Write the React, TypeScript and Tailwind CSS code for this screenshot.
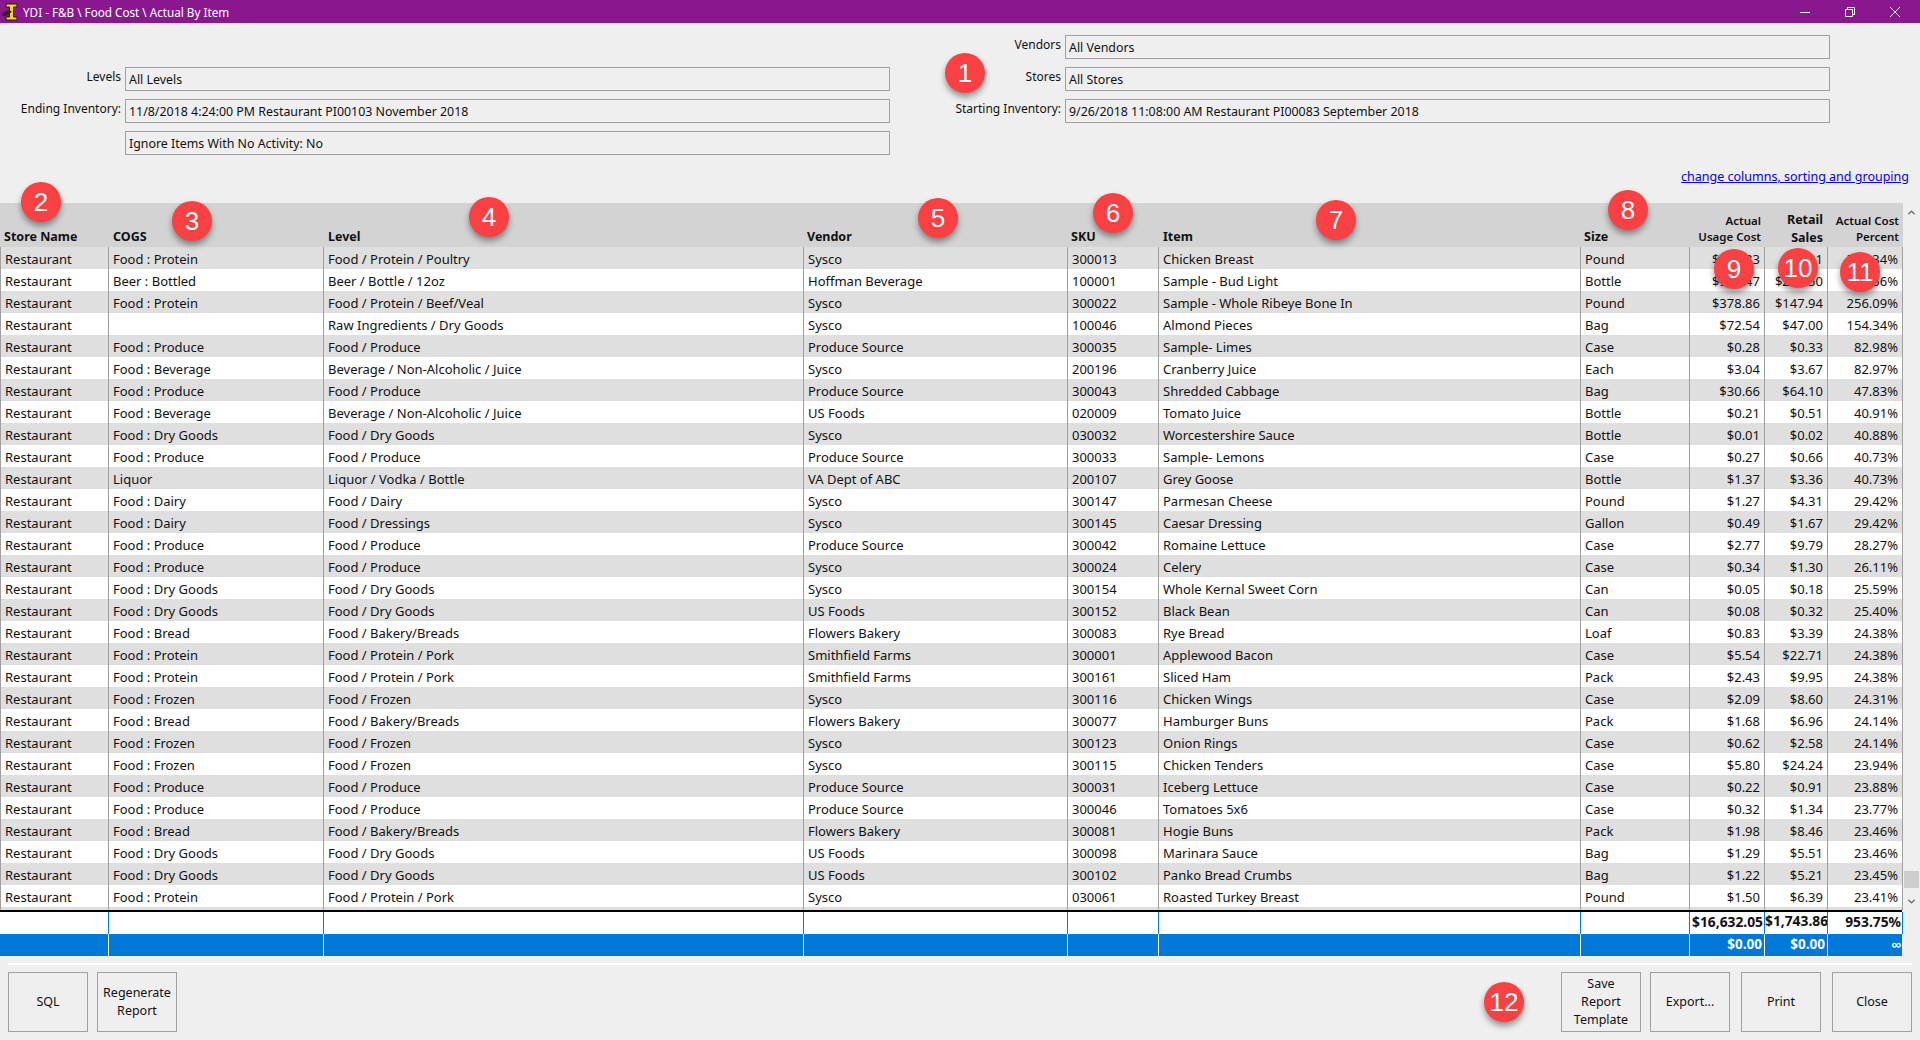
import React from "react";
import { ChevronDown, ChevronUp } from "lucide-react";

const cols = "grid grid-cols-[108px_215px_480px_264px_91px_422px_109px_75px_63px_76px]";

const rows = [
  ["Food : Protein", "Food / Protein / Poultry", "Sysco", "300013", "Chicken Breast", "Pound", "$508.83", "$90.01", "564.34%"],
  ["Beer : Bottled", "Beer / Bottle / 12oz", "Hoffman Beverage", "100001", "Sample - Bud Light", "Bottle", "$912.47", "$246.50", "380.56%"],
  ["Food : Protein", "Food / Protein / Beef/Veal", "Sysco", "300022", "Sample - Whole Ribeye Bone In", "Pound", "$378.86", "$147.94", "256.09%"],
  ["", "Raw Ingredients / Dry Goods", "Sysco", "100046", "Almond Pieces", "Bag", "$72.54", "$47.00", "154.34%"],
  ["Food : Produce", "Food / Produce", "Produce Source", "300035", "Sample- Limes", "Case", "$0.28", "$0.33", "82.98%"],
  ["Food : Beverage", "Beverage / Non-Alcoholic / Juice", "Sysco", "200196", "Cranberry Juice", "Each", "$3.04", "$3.67", "82.97%"],
  ["Food : Produce", "Food / Produce", "Produce Source", "300043", "Shredded Cabbage", "Bag", "$30.66", "$64.10", "47.83%"],
  ["Food : Beverage", "Beverage / Non-Alcoholic / Juice", "US Foods", "020009", "Tomato Juice", "Bottle", "$0.21", "$0.51", "40.91%"],
  ["Food : Dry Goods", "Food / Dry Goods", "Sysco", "030032", "Worcestershire Sauce", "Bottle", "$0.01", "$0.02", "40.88%"],
  ["Food : Produce", "Food / Produce", "Produce Source", "300033", "Sample- Lemons", "Case", "$0.27", "$0.66", "40.73%"],
  ["Liquor", "Liquor / Vodka / Bottle", "VA Dept of ABC", "200107", "Grey Goose", "Bottle", "$1.37", "$3.36", "40.73%"],
  ["Food : Dairy", "Food / Dairy", "Sysco", "300147", "Parmesan Cheese", "Pound", "$1.27", "$4.31", "29.42%"],
  ["Food : Dairy", "Food / Dressings", "Sysco", "300145", "Caesar Dressing", "Gallon", "$0.49", "$1.67", "29.42%"],
  ["Food : Produce", "Food / Produce", "Produce Source", "300042", "Romaine Lettuce", "Case", "$2.77", "$9.79", "28.27%"],
  ["Food : Produce", "Food / Produce", "Sysco", "300024", "Celery", "Case", "$0.34", "$1.30", "26.11%"],
  ["Food : Dry Goods", "Food / Dry Goods", "Sysco", "300154", "Whole Kernal Sweet Corn", "Can", "$0.05", "$0.18", "25.59%"],
  ["Food : Dry Goods", "Food / Dry Goods", "US Foods", "300152", "Black Bean", "Can", "$0.08", "$0.32", "25.40%"],
  ["Food : Bread", "Food / Bakery/Breads", "Flowers Bakery", "300083", "Rye Bread", "Loaf", "$0.83", "$3.39", "24.38%"],
  ["Food : Protein", "Food / Protein / Pork", "Smithfield Farms", "300001", "Applewood Bacon", "Case", "$5.54", "$22.71", "24.38%"],
  ["Food : Protein", "Food / Protein / Pork", "Smithfield Farms", "300161", "Sliced Ham", "Pack", "$2.43", "$9.95", "24.38%"],
  ["Food : Frozen", "Food / Frozen", "Sysco", "300116", "Chicken Wings", "Case", "$2.09", "$8.60", "24.31%"],
  ["Food : Bread", "Food / Bakery/Breads", "Flowers Bakery", "300077", "Hamburger Buns", "Pack", "$1.68", "$6.96", "24.14%"],
  ["Food : Frozen", "Food / Frozen", "Sysco", "300123", "Onion Rings", "Case", "$0.62", "$2.58", "24.14%"],
  ["Food : Frozen", "Food / Frozen", "Sysco", "300115", "Chicken Tenders", "Case", "$5.80", "$24.24", "23.94%"],
  ["Food : Produce", "Food / Produce", "Produce Source", "300031", "Iceberg Lettuce", "Case", "$0.22", "$0.91", "23.88%"],
  ["Food : Produce", "Food / Produce", "Produce Source", "300046", "Tomatoes 5x6", "Case", "$0.32", "$1.34", "23.77%"],
  ["Food : Bread", "Food / Bakery/Breads", "Flowers Bakery", "300081", "Hogie Buns", "Pack", "$1.98", "$8.46", "23.46%"],
  ["Food : Dry Goods", "Food / Dry Goods", "US Foods", "300098", "Marinara Sauce", "Bag", "$1.29", "$5.51", "23.46%"],
  ["Food : Dry Goods", "Food / Dry Goods", "US Foods", "300102", "Panko Bread Crumbs", "Bag", "$1.22", "$5.21", "23.45%"],
  ["Food : Protein", "Food / Protein / Pork", "Sysco", "030061", "Roasted Turkey Breast", "Pound", "$1.50", "$6.39", "23.41%"],
];

const heads = [
  ["Store Name", "pl-[4px]"],
  ["COGS", "pl-[5px]"],
  ["Level", "pl-[5px]"],
  ["Vendor", "pl-[4px]"],
  ["SKU", "pl-[4px]"],
  ["Item", "pl-[5px]"],
  ["Size", "pl-[4px]"],
];

// numbered callouts laid over the screenshot
const badges = [
  ["1", "left-[945px] top-[53px]"],
  ["2", "left-[21px] top-[182px]"],
  ["3", "left-[172px] top-[201px]"],
  ["4", "left-[469px] top-[197px]"],
  ["5", "left-[918px] top-[198px]"],
  ["6", "left-[1093px] top-[193px]"],
  ["7", "left-[1316px] top-[200px]"],
  ["8", "left-[1608px] top-[190px]"],
  ["9", "left-[1714px] top-[249px]"],
  ["10", "left-[1778px] top-[248px]"],
  ["11", "left-[1840px] top-[252px]"],
  ["12", "left-[1484px] top-[982px]"],
];

const Field = ({ label, value }: { label?: string; value: string }) => (
  <div className="flex h-[24px] items-start">
    <span className="w-[121px] shrink-0 text-right text-[12px] leading-[20px]">{label}</span>
    <div className="ml-[4px] flex h-[24px] flex-1 items-center border border-[#a0a0a0] pl-[3px] pt-[2px] text-[12.4px]">{value}</div>
  </div>
);

const Cell = ({ children, right }: { children?: React.ReactNode; right?: boolean }) => (
  <div className={`h-full overflow-hidden whitespace-nowrap border-l border-[#a0a0a0] leading-[24px] ${right ? "pr-[4px] text-right" : "pl-[4px]"}`}>
    {children}
  </div>
);

const Btn = ({ children }: { children: React.ReactNode }) => (
  <button className="flex h-[60px] w-[80px] items-center justify-center border border-[#a0a0a0] px-1 text-center leading-[18px]">
    {children}
  </button>
);

export default function App() {
  return (
    <div className="relative flex h-[1040px] w-[1920px] flex-col overflow-hidden bg-[#efefef] font-['Noto_Sans',sans-serif] text-[12.5px] text-[#111]">
      <div className="flex h-[23px] items-center bg-[#89188f] text-[11.7px] text-white">
        <svg viewBox="0 0 18 18" className="ml-[1px] h-[18px] w-[18px]">
          <path d="M5 1h11v3h-3.500v10H16v3H5v-3h3.500V4H5z" fill="#f5d90a" stroke="#1a1a1a" strokeWidth="1" />
          <path d="M1 12c1-3 4-4.500 8-4.500l2 1.500c-2 .5-3.500 2.500-6 4-2 .5-3.500 0-4-1z" fill="#262626" />
        </svg>
        <span className="ml-[4px] pt-[2px]">YDI - F&amp;B \ Food Cost \ Actual By Item</span>
        <div className="ml-auto flex items-center gap-[35px] pr-[20px]">
          <svg viewBox="0 0 10 10" className="h-[10px] w-[10px]" fill="none" stroke="white" strokeWidth="1">
            <path d="M0 5.500h10" />
          </svg>
          <svg viewBox="0 0 10 10" className="h-[10px] w-[10px]" fill="none" stroke="white" strokeWidth="1">
            <path d="M.5 2.500h7v7h-7zM2.500 2.500v-2h7v7h-2" />
          </svg>
          <svg viewBox="0 0 10 10" className="h-[10px] w-[10px]" fill="none" stroke="white" strokeWidth="1">
            <path d="M0 0l10 10M10 0L0 10" />
          </svg>
        </div>
      </div>

      <div className="flex h-[180px] pt-[12px]">
        <div className="flex w-[890px] flex-col gap-[8px] pt-[32px]">
          <Field label="Levels" value="All Levels" />
          <Field label="Ending Inventory:" value="11/8/2018 4:24:00 PM Restaurant PI00103 November 2018" />
          <Field value="Ignore Items With No Activity: No" />
        </div>
        <div className="ml-[50px] flex w-[890px] flex-col gap-[8px]">
          <Field label="Vendors" value="All Vendors" />
          <Field label="Stores" value="All Stores" />
          <Field label="Starting Inventory:" value="9/26/2018 11:08:00 AM Restaurant PI00083 September 2018" />
          <div className="-mr-[79px] mt-[37px] text-right">
            <a className="text-[#0000ee] underline">change columns, sorting and grouping</a>
          </div>
        </div>
      </div>

      <div className="flex">
        <div className="w-[1903px] text-[13px]">
          <div className={`${cols} h-[44px] bg-[#d3d3d3] text-[12.5px] font-bold`}>
            {heads.map(([h, pad]) => (
              <div key={h} className={`flex items-end pb-[1px] leading-[18px] ${pad}`}>{h}</div>
            ))}
            <div className="flex items-end justify-end pb-[2px] pr-[3px] text-right text-[11.5px] font-semibold leading-[16px]">Actual<br />Usage Cost</div>
            <div className="flex items-end justify-end pr-[4px] text-right leading-[18px]">Retail<br />Sales</div>
            <div className="flex items-end justify-end pb-[2px] pr-[4px] text-right text-[11.5px] font-semibold leading-[16px]">Actual Cost<br />Percent</div>
          </div>

          {rows.map((r, i) => (
            <div key={i} className={`${cols} h-[22px] ${i % 2 === 0 ? "bg-[#dfdfdf]" : "bg-white"}`}>
              <Cell>Restaurant</Cell>
              {r.slice(0, 6).map((v, j) => <Cell key={j}>{v}</Cell>)}
              {r.slice(6, 8).map((v, j) => <Cell key={j} right>{v}</Cell>)}
              <div className="h-full overflow-hidden border-x border-[#a0a0a0] pr-[4px] text-right leading-[24px]">{r[8]}</div>
            </div>
          ))}

          <div className={`${cols} h-[3px] bg-[#dfdfdf]`}>
            {Array.from({ length: 9 }).map((_, i) => <Cell key={i} />)}
            <div className="border-x border-[#a0a0a0]" />
          </div>
          <div className="h-[2px] w-[1902px] bg-black" />

          <div className={`${cols} h-[22px] bg-white text-[13.8px] font-bold`}>
            {Array.from({ length: 7 }).map((_, i) => (
              <div key={i} className={i ? "border-l border-[#0078d7]" : ""} />
            ))}
            <div className="whitespace-nowrap border-l border-[#0078d7] pr-[1px] text-right leading-[20px]">$16,632.05</div>
            <div className="whitespace-nowrap border-l border-[#0078d7] pr-[1px] text-right leading-[18px]">$1,743.86</div>
            <div className="whitespace-nowrap border-x border-[#0078d7] pr-[1px] text-right leading-[20px]">953.75%</div>
          </div>
          <div className={`${cols} h-[22px] w-[1902px] bg-[#0078d7] text-[13.5px] font-bold text-white`}>
            {Array.from({ length: 7 }).map((_, i) => (
              <div key={i} className={i ? "border-l border-white" : ""} />
            ))}
            {["$0.00", "$0.00", "∞"].map((v, i) => (
              <div key={i} className="border-l border-white pr-[2px] text-right leading-[20px]">{v}</div>
            ))}
          </div>
        </div>

        <div className="flex h-[704px] flex-1 flex-col items-center">
          <ChevronUp size={11} className="mt-[4px] text-[#606060]" strokeWidth={3} />
          <div className="mb-[8px] mt-auto h-[17px] w-[15px] bg-[#cdcdcd]" />
          <ChevronDown size={11} className="text-[#606060]" strokeWidth={3} />
        </div>
      </div>

      <div className="mx-[8px] mt-[7px] h-[2px] bg-white" />

      <div className="mt-[7px] flex justify-between px-[8px]">
        <div className="flex gap-[9px]">
          <Btn>SQL</Btn>
          <Btn>Regenerate Report</Btn>
        </div>
        <div className="flex gap-[9px]">
          <Btn>Save Report Template</Btn>
          <Btn>Export...</Btn>
          <div className="ml-[2px]"><Btn>Print</Btn></div>
          <div className="ml-[2px]"><Btn>Close</Btn></div>
        </div>
      </div>

      {badges.map(([n, pos]) => (
        <div
          key={n}
          className={`absolute ${pos} flex h-[40px] w-[40px] items-center justify-center rounded-full bg-[#f94144] font-['Liberation_Sans',sans-serif] text-[26px] text-white shadow-[0_4px_6px_rgba(0,0,0,0.4)]`}
        >
          {n}
        </div>
      ))}
    </div>
  );
}
